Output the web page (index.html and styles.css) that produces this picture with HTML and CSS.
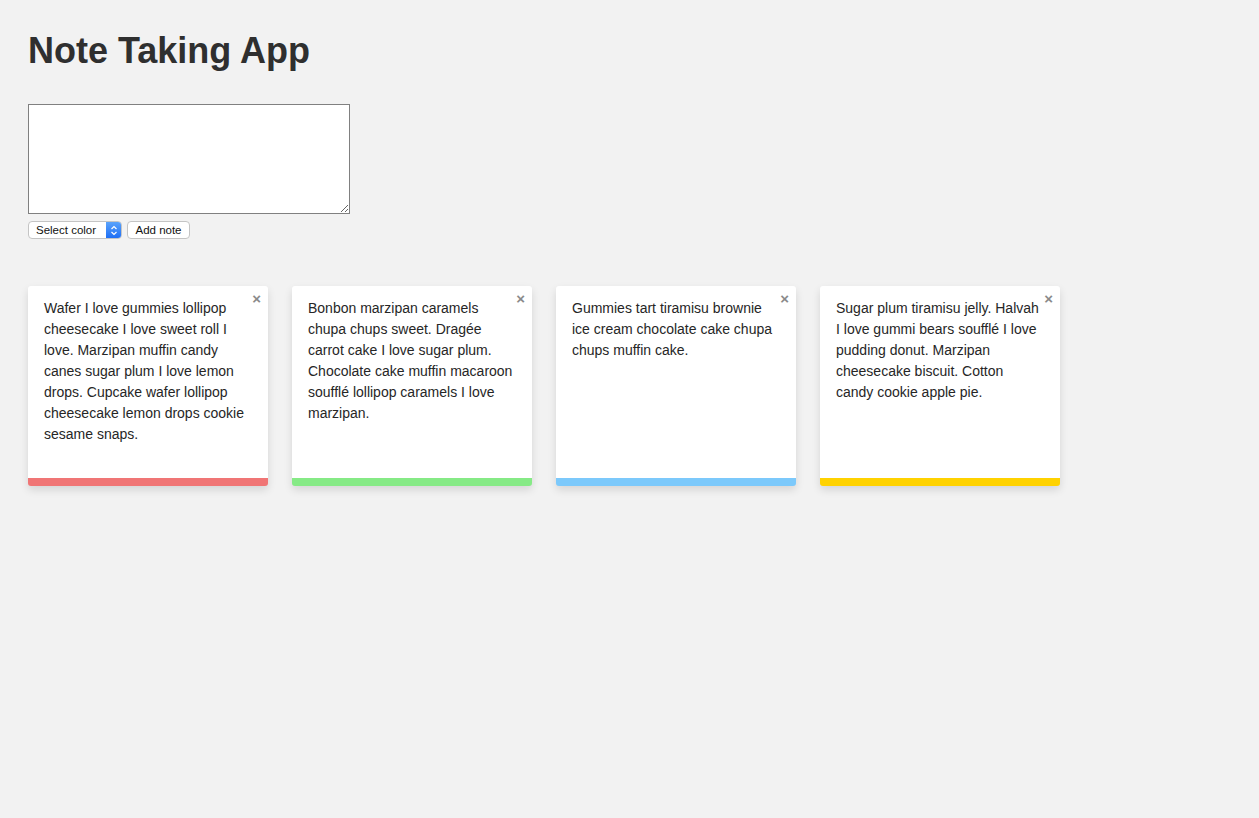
FILE: index.html
```html
<!DOCTYPE html>
<html>
<head>
<meta charset="utf-8">
<title>Note Taking App</title>
<link rel="stylesheet" href="styles.css">
</head>
<body>
<div class="app">
  <h1 class="title">Note Taking App</h1>
  <div class="form">
    <textarea class="input"></textarea>
    <div class="controls">
      <div class="select">
        <span class="select-label">Select color</span>
        <span class="select-arrow">
          <svg width="8" height="11" viewBox="0 0 8 11"><path d="M1.5 4 L4 1.5 L6.5 4 M1.5 7 L4 9.5 L6.5 7" fill="none" stroke="#fff" stroke-width="1.2"/></svg>
        </span>
      </div>
      <button class="btn">Add note</button>
    </div>
  </div>
  <div class="notes">
    <div class="note red">
      <span class="close">×</span>
      <p class="note-text">Wafer I love gummies lollipop cheesecake I love sweet roll I love. Marzipan muffin candy canes sugar plum I love lemon drops. Cupcake wafer lollipop cheesecake lemon drops cookie sesame snaps.</p>
    </div>
    <div class="note green">
      <span class="close">×</span>
      <p class="note-text">Bonbon marzipan caramels chupa chups sweet. Dragée carrot cake I love sugar plum. Chocolate cake muffin macaroon soufflé lollipop caramels I love marzipan.</p>
    </div>
    <div class="note blue">
      <span class="close">×</span>
      <p class="note-text">Gummies tart tiramisu brownie ice cream chocolate cake chupa chups muffin cake.</p>
    </div>
    <div class="note yellow">
      <span class="close">×</span>
      <p class="note-text">Sugar plum tiramisu jelly. Halvah I love gummi bears soufflé I love pudding donut. Marzipan cheesecake biscuit. Cotton candy cookie apple pie.</p>
    </div>
  </div>
</div>
</body>
</html>
```
FILE: styles.css
```css
* { box-sizing: border-box; }
html, body {
  margin: 0;
  padding: 0;
  background: #f2f2f2;
  font-family: "Liberation Sans", Arial, sans-serif;
  color: #333;
}
.app {
  padding: 28px 28px;
}
.title {
  margin: 0;
  font-size: 36px;
  line-height: 46px;
  font-weight: bold;
  color: #2f2f2f;
}
.form {
  margin-top: 30px;
  display: flex;
  flex-direction: column;
  align-items: flex-start;
}
.input {
  width: 322px;
  height: 110px;
  border: 1px solid #808080;
  background: #fff;
  margin: 0;
  display: block;
}
.controls {
  display: flex;
  gap: 5px;
  margin-top: 7px;
}
.select {
  display: flex;
  align-items: stretch;
  width: 94px;
  height: 18px;
  border: 1px solid #c4c4c4;
  border-radius: 4px;
  background: #fff;
  font-size: 11.5px;
  color: #111;
  overflow: hidden;
}
.select-label {
  flex: 1;
  padding-left: 7px;
  line-height: 16px;
}
.select-arrow {
  width: 15px;
  background: linear-gradient(#5aa3fb, #1f6ff5);
  display: flex;
  align-items: center;
  justify-content: center;
}
.btn {
  width: 63px;
  height: 18px;
  padding: 0;
  border: 1px solid #c4c4c4;
  border-radius: 4px;
  background: #fff;
  font-family: "Liberation Sans", Arial, sans-serif;
  font-size: 11.5px;
  color: #111;
  line-height: 16px;
}
.notes {
  margin-top: 47px;
  display: flex;
  gap: 24px;
}
.note {
  position: relative;
  width: 240px;
  height: 200px;
  background: #fff;
  border-radius: 3px;
  box-shadow: 0 4px 8px rgba(0, 0, 0, 0.12);
  padding: 12px 16px 0 16px;
  border-bottom: 8px solid;
}
.note.red { border-bottom-color: #f07575; }
.note.green { border-bottom-color: #86ea86; }
.note.blue { border-bottom-color: #7cc9fb; }
.note.yellow { border-bottom-color: #ffd200; }
.note-text {
  margin: 0;
  font-size: 14px;
  line-height: 21px;
  color: #262626;
}
.close {
  position: absolute;
  top: 4px;
  right: 7px;
  font-size: 15px;
  line-height: 18px;
  color: #8a8a8a;
  font-weight: bold;
}
```
